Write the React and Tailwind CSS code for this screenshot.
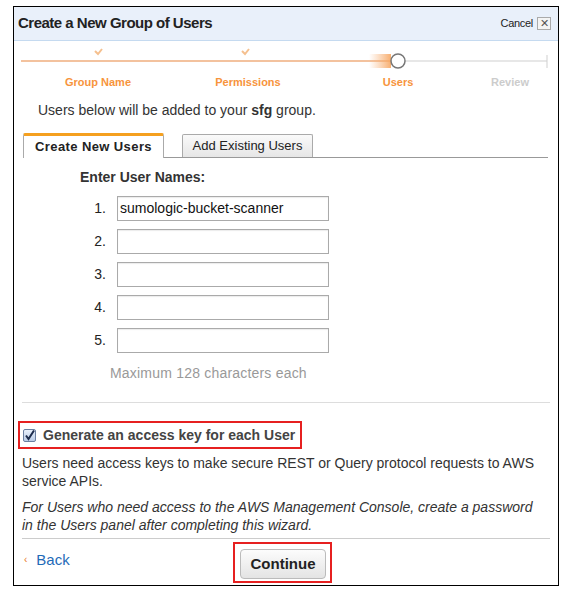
import React from 'react';

const font = { fontFamily: '"Liberation Sans", Arial, sans-serif' };

function Stepper() {
  return (
    <div>
      <svg width="544" height="30" className="block">
        <defs>
          <linearGradient id="glow" x1="0" x2="1" y1="0" y2="0">
            <stop offset="0" stopColor="#f7b27a" stopOpacity="0" />
            <stop offset="1" stopColor="#f7a660" stopOpacity="0.9" />
          </linearGradient>
        </defs>
        <line x1="7" y1="20" x2="377" y2="20" stroke="#efae7e" strokeWidth="1.5" />
        <rect x="355" y="13" width="22" height="14" fill="url(#glow)" />
        <line x1="391" y1="20" x2="533" y2="20" stroke="#cfcfcf" strokeWidth="1" />
        <line x1="533" y1="14" x2="533" y2="27" stroke="#cfcfcf" strokeWidth="1" />
        <circle cx="384" cy="20" r="7" fill="#fff" stroke="#777" strokeWidth="1.5" />
        <path d="M81 10 l3 3 l4 -5" fill="none" stroke="#f5c08f" strokeWidth="2" />
        <path d="M228 10 l3 3 l4 -5" fill="none" stroke="#f5c08f" strokeWidth="2" />
      </svg>
      <div className="flex mt-[5px] pl-[9px] text-[11px] leading-[12px] font-bold">
        <div className="w-[150px] text-center text-[#f7943c]">Group Name</div>
        <div className="w-[150px] text-center text-[#f7943c]">Permissions</div>
        <div className="w-[150px] text-center text-[#f7943c]">Users</div>
        <div className="w-[74px] text-center text-[#cccccc]">Review</div>
      </div>
    </div>
  );
}

export default function App() {
  const rows = [1, 2, 3, 4, 5];
  return (
    <div className="bg-white w-[566px] h-[598px] pt-[6px] pl-[13px]" style={font}>
      <div className="w-[546px] border border-black text-[#333] pb-[2px]">
        {/* header */}
        <div className="h-[34px] bg-[#e9f0fa] border-b border-[#c5daf0] flex items-center justify-between pl-[4px] pr-[7px]">
          <h1 className="text-[15px] font-bold text-[#222] tracking-[-0.5px]">Create a New Group of Users</h1>
          <div className="flex items-center gap-[4px]">
            <span className="text-[11px] text-[#222] tracking-[-0.3px]">Cancel</span>
            <span className="w-[14px] h-[13px] border border-[#aaa] bg-[#f4f4f4] flex items-center justify-center text-[11px] leading-none text-[#555]">✕</span>
          </div>
        </div>

        <Stepper />

        <p className="mt-[13px] pl-[24px] text-[14px] leading-[18px]">
          Users below will be added to your <b>sfg</b> group.
        </p>

        {/* tabs */}
        <div className="mt-[13px] ml-[9px] mr-[10px] h-[26px] border-b border-[#999] flex items-end">
          <div className="w-[141px] h-[25px] -mb-px bg-white border-x border-[#aaa] border-t-[3px] border-t-[#f5a01f] rounded-t-[2px] flex items-center justify-center text-[13px] font-bold text-[#222] tracking-[0.4px]">
            Create New Users
          </div>
          <div className="ml-[18px] w-[131px] h-[23px] bg-gradient-to-b from-[#fafafa] to-[#e6e6e6] border border-b-0 border-[#aaa] rounded-t-[2px] flex items-center justify-center text-[13px] text-[#222]">
            Add Existing Users
          </div>
        </div>

        <div className="mt-[10px] pl-[66px] text-[14px] leading-[18px] font-bold">Enter User Names:</div>

        <div className="mt-[10px] flex flex-col gap-[8px]">
          {rows.map((n) => (
            <div key={n} className="flex items-center">
              <span className="w-[92px] text-right text-[14px] text-[#222]">{n}.</span>
              <div className="ml-[11px] w-[212px] h-[25px] border border-[#aaa] shadow-[inset_0_1px_1px_rgba(0,0,0,0.08)] flex items-center pl-[2px] text-[14px] text-[#111]">
                {n === 1 ? 'sumologic-bucket-scanner' : ''}
              </div>
            </div>
          ))}
        </div>

        <div className="mt-[11px] pl-[96px] text-[14px] leading-[18px] text-[#999] tracking-[0.2px]">Maximum 128 characters each</div>

        <div className="mt-[20px] mx-[8px] border-t border-[#ddd]" />

        <div className="mt-[18px] ml-[4px] w-[284px] h-[28px] border-2 border-[#e62020] flex items-center pl-[3px]">
          <span className="w-[13px] h-[13px] rounded-[2px] border border-[#6a7fa0] bg-gradient-to-b from-[#e8f0fb] to-[#b9cbe6] flex items-center justify-center">
            <svg width="11" height="11" viewBox="0 0 11 11">
              <path d="M2 5.5 L4.5 9 L10 0.5" fill="none" stroke="#1c2c4c" strokeWidth="2" />
            </svg>
          </span>
          <span className="ml-[7px] text-[14px] font-bold text-[#444]">Generate an access key for each User</span>
        </div>

        <p className="mt-[5px] px-[8px] text-[14px] leading-[18px]">
          Users need access keys to make secure REST or Query protocol requests to AWS service APIs.
        </p>
        <p className="mt-[8px] pl-[8px] pr-[16px] text-[14px] leading-[18px] italic">
          For Users who need access to the AWS Management Console, create a password in the Users panel after completing this wizard.
        </p>

        <div className="mt-[4px] mx-[8px] border-t border-[#ccc]" />

        {/* footer */}
        <div className="mt-[3px] flex items-start">
          <div className="mt-[9px] ml-[10px] flex items-center w-[209px]">
            <span className="text-[#e8762a] text-[10px] leading-none">‹</span>
            <span className="ml-[9px] text-[15px] leading-[18px] text-[#1f6bb8]">Back</span>
          </div>
          <div className="w-[99px] h-[41px] border-2 border-[#e62020] pt-[5px] pl-[5px]">
            <button className="w-[86px] h-[30px] rounded-[4px] border border-[#bbb] bg-gradient-to-b from-[#fcfcfc] to-[#e4e4e4] text-[15px] font-bold text-[#222]" style={font}>
              Continue
            </button>
          </div>
        </div>
      </div>
    </div>
  );
}
